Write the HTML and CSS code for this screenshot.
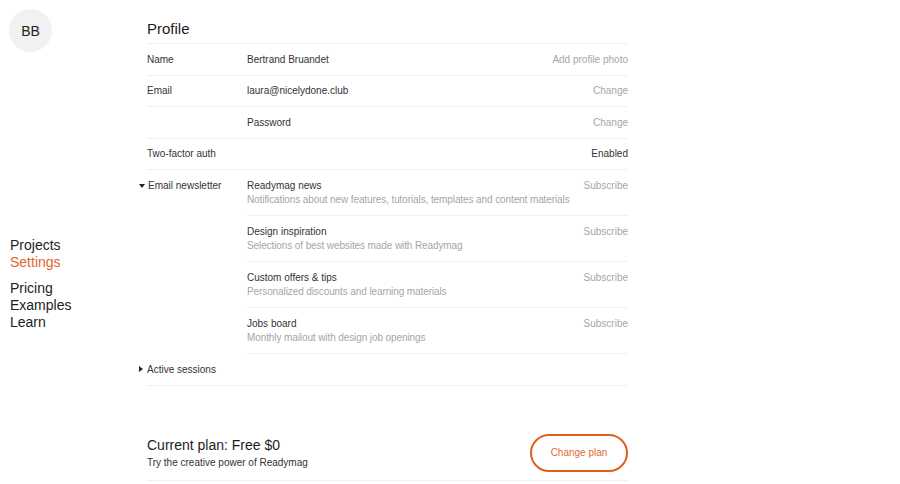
FILE: index.html
```html
<!DOCTYPE html>
<html>
<head>
<meta charset="utf-8">
<link rel="stylesheet" href="styles.css">
</head>
<body>
<div class="page">
  <aside class="sidebar">
    <div class="avatar">BB</div>
    <nav class="nav">
      <div class="nav-group">
        <a class="nav-link">Projects</a>
        <a class="nav-link active">Settings</a>
      </div>
      <div class="nav-group">
        <a class="nav-link">Pricing</a>
        <a class="nav-link">Examples</a>
        <a class="nav-link">Learn</a>
      </div>
    </nav>
  </aside>
  <main class="main">
    <h1 class="title">Profile</h1>
    <div class="row">
      <div class="label">Name</div>
      <div class="value">Bertrand Bruandet</div>
      <div class="action">Add profile photo</div>
    </div>
    <div class="row">
      <div class="label">Email</div>
      <div class="value">laura@nicelydone.club</div>
      <div class="action">Change</div>
    </div>
    <div class="row">
      <div class="label"></div>
      <div class="value">Password</div>
      <div class="action">Change</div>
    </div>
    <div class="row">
      <div class="label">Two-factor auth</div>
      <div class="value"></div>
      <div class="action dark">Enabled</div>
    </div>
    <div class="group">
      <div class="group-label"><span class="tri tri-down"></span>Email newsletter</div>
      <div class="group-items">
        <div class="item">
          <div class="item-text">
            <div class="item-title">Readymag news</div>
            <div class="item-desc">Notifications about new features, tutorials, templates and content materials</div>
          </div>
          <div class="action">Subscribe</div>
        </div>
        <div class="item">
          <div class="item-text">
            <div class="item-title">Design inspiration</div>
            <div class="item-desc">Selections of best websites made with Readymag</div>
          </div>
          <div class="action">Subscribe</div>
        </div>
        <div class="item">
          <div class="item-text">
            <div class="item-title">Custom offers &amp; tips</div>
            <div class="item-desc">Personalized discounts and learning materials</div>
          </div>
          <div class="action">Subscribe</div>
        </div>
        <div class="item">
          <div class="item-text">
            <div class="item-title">Jobs board</div>
            <div class="item-desc">Monthly mailout with design job openings</div>
          </div>
          <div class="action">Subscribe</div>
        </div>
      </div>
    </div>
    <div class="row sessions">
      <div class="label"><span class="tri tri-right"></span>Active sessions</div>
    </div>
    <div class="plan">
      <div class="plan-text">
        <div class="plan-title">Current plan: Free $0</div>
        <div class="plan-desc">Try the creative power of Readymag</div>
      </div>
      <button class="plan-btn">Change plan</button>
    </div>
  </main>
</div>
</body>
</html>
```
FILE: styles.css
```css
html, body {
  margin: 0;
  padding: 0;
  background: #fff;
}
body {
  font-family: "Liberation Sans", Arial, sans-serif;
  color: #222;
}
.page {
  display: flex;
  align-items: flex-start;
}
.sidebar {
  width: 147px;
  flex: none;
  display: flex;
  flex-direction: column;
}
.avatar {
  width: 43px;
  height: 43px;
  margin: 9px 0 0 9px;
  border-radius: 50%;
  background: #f1f1f1;
  display: flex;
  align-items: center;
  justify-content: center;
  font-size: 14px;
  color: #222;
}
.nav {
  margin: 185px 0 0 10px;
  display: flex;
  flex-direction: column;
  gap: 9px;
}
.nav-group {
  display: flex;
  flex-direction: column;
}
.nav-link {
  font-size: 14px;
  line-height: 17px;
  color: #1d1d1d;
}
.nav-link.active {
  color: #e4642a;
}
.main {
  width: 481px;
  padding-top: 18px;
}
.title {
  margin: 0;
  font-size: 15px;
  font-weight: normal;
  line-height: 22px;
  padding-bottom: 3px;
  color: #1d1d1d;
}
.row {
  display: flex;
  align-items: center;
  height: 31.5px;
  box-sizing: border-box;
  border-top: 1px solid #f0f0f0;
  font-size: 10px;
}
.label {
  width: 100px;
  flex: none;
  color: #333;
}
.value {
  flex: 1;
  color: #333;
}
.action {
  color: #a6a6a6;
  font-size: 10px;
  text-align: right;
}
.action.dark {
  color: #333;
}
.tri {
  display: inline-block;
  width: 0;
  height: 0;
  margin-left: -8px;
  margin-right: 3px;
  vertical-align: 1px;
}
.tri-down {
  border-left: 3px solid transparent;
  border-right: 3px solid transparent;
  border-top: 4px solid #222;
}
.tri-right {
  border-top: 3px solid transparent;
  border-bottom: 3px solid transparent;
  border-left: 4px solid #222;
  margin-right: 4px;
}
.group {
  display: flex;
  border-top: 1px solid #f0f0f0;
  font-size: 10px;
}
.group-label {
  width: 100px;
  flex: none;
  padding-top: 9px;
  line-height: 14px;
  color: #333;
}
.group-items {
  flex: 1;
}
.item {
  display: flex;
  justify-content: space-between;
  align-items: flex-start;
  padding: 9px 0 8px;
  border-bottom: 1px solid #f0f0f0;
  line-height: 14px;
}
.item-title {
  color: #333;
}
.item-desc {
  color: #a6a6a6;
  letter-spacing: -0.1px;
}
.sessions {
  border-top: none;
  height: 31.5px;
  border-bottom: 1px solid #f0f0f0;
}
.plan {
  display: flex;
  align-items: center;
  justify-content: space-between;
  padding: 48px 0 8px;
  border-bottom: 1px solid #f0f0f0;
}
.plan-title {
  font-size: 14px;
  line-height: 18px;
  color: #1d1d1d;
}
.plan-desc {
  margin-top: 2px;
  font-size: 10px;
  line-height: 14px;
  color: #333;
}
.plan-btn {
  width: 98px;
  height: 38px;
  box-sizing: border-box;
  border: 2px solid #df5f1f;
  border-radius: 20px;
  background: #fff;
  color: #df6a2e;
  font-family: "Liberation Sans", Arial, sans-serif;
  font-size: 10px;
  padding: 0;
}
```
